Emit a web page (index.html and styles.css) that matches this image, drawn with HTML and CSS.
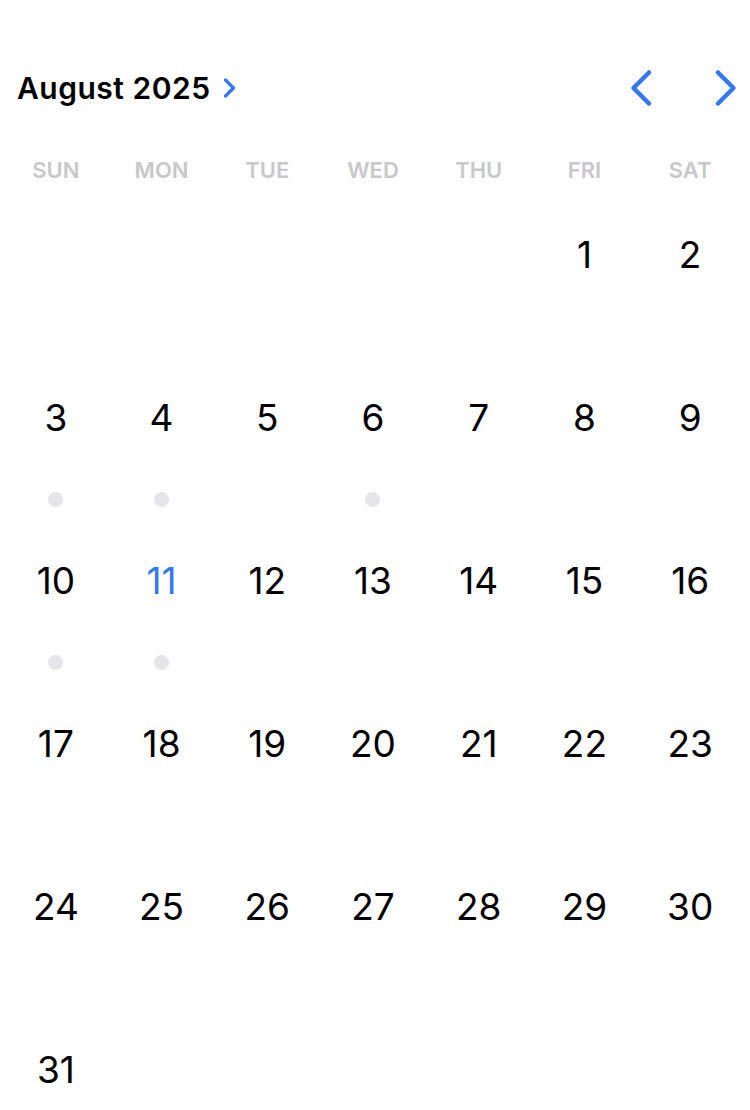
FILE: index.html
```html
<!DOCTYPE html>
<html lang="en">
<head>
    <meta charset="UTF-8">
    <meta name="viewport" content="width=device-width, initial-scale=1.0">
    <title>Calendar</title>
    <link rel="stylesheet" href="styles.css">
</head>
<body>
    <div class="calendar">
        <div class="header">
            <div class="month-title">
                <span>August 2025</span>
                <svg class="title-chevron" width="15" height="20" viewBox="0 0 15 20">
                    <path d="M3.5 2 L11.5 10 L3.5 18" fill="none" stroke="#3478f6" stroke-width="3.2" stroke-linecap="round" stroke-linejoin="round"/>
                </svg>
            </div>
            <div class="nav">
                <svg class="nav-btn" width="28" height="40" viewBox="0 0 28 40">
                    <path d="M22 4.5 L6.5 20 L22 35.5" fill="none" stroke="#3478f6" stroke-width="4.5" stroke-linecap="round" stroke-linejoin="round"/>
                </svg>
                <svg class="nav-btn" width="28" height="40" viewBox="0 0 28 40">
                    <path d="M6 4.5 L21.5 20 L6 35.5" fill="none" stroke="#3478f6" stroke-width="4.5" stroke-linecap="round" stroke-linejoin="round"/>
                </svg>
            </div>
        </div>
        <div class="weekdays">
            <div>SUN</div><div>MON</div><div>TUE</div><div>WED</div><div>THU</div><div>FRI</div><div>SAT</div>
        </div>
        <div class="days" id="days"></div>
    </div>

    <script>
        const days = document.getElementById('days');
        const firstDay = 5; // Aug 1 2025 is a Friday
        const today = 11;
        const marked = [3, 4, 6, 10, 11];

        for (let i = 0; i < firstDay; i++) {
            const empty = document.createElement('div');
            empty.className = 'day';
            days.appendChild(empty);
        }
        for (let d = 1; d <= 31; d++) {
            const cell = document.createElement('div');
            cell.className = 'day';
            const num = document.createElement('div');
            num.className = 'num' + (d === today ? ' today' : '');
            num.textContent = d;
            cell.appendChild(num);
            if (marked.includes(d)) {
                const dot = document.createElement('div');
                dot.className = 'dot';
                cell.appendChild(dot);
            }
            days.appendChild(cell);
        }
    </script>
</body>
</html>
```

FILE: styles.css
```css
body {
    margin: 0;
    background-color: #fff;
    font-family: Inter, "Noto Sans", sans-serif;
    color: #000;
}
.calendar {
    padding: 60px 7px 0 3px;
}
.header {
    display: flex;
    justify-content: space-between;
    align-items: center;
    height: 55px;
    padding-left: 14px;
}
.month-title {
    display: flex;
    align-items: center;
    gap: 11px;
    font-size: 30px;
    font-weight: 600;
    letter-spacing: 0.5px;
}
.title-chevron {
    margin-top: 1px;
}
.nav {
    display: flex;
    gap: 57px;
    padding-right: 3px;
}
.weekdays {
    display: grid;
    grid-template-columns: repeat(7, 1fr);
    margin-top: 35px;
    height: 40px;
    align-items: center;
    text-align: center;
    font-size: 22px;
    font-weight: 600;
    color: #c8c8ca;
}
.days {
    display: grid;
    grid-template-columns: repeat(7, 1fr);
    grid-auto-rows: 163px;
    margin-top: 23px;
}
.day {
    display: flex;
    flex-direction: column;
    align-items: center;
    padding-top: 20px;
}
.num {
    font-size: 37px;
    line-height: 44px;
    font-weight: 400;
}
.num.today {
    color: #3478f6;
}
.dot {
    width: 15px;
    height: 15px;
    border-radius: 50%;
    background-color: #e5e5ea;
    margin-top: 52px;
}
```
